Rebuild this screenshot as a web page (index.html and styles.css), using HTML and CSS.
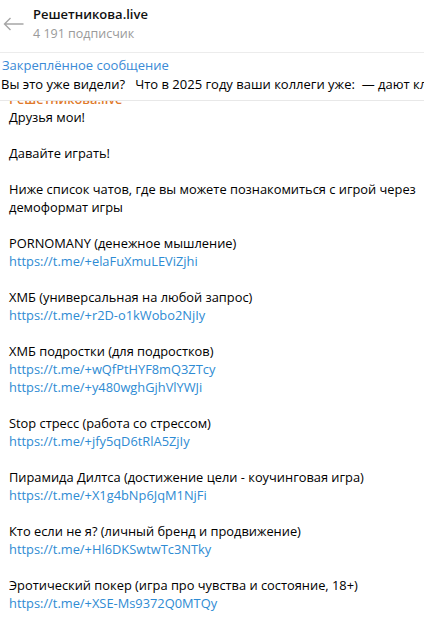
FILE: index.html
```html
<!DOCTYPE html>
<html lang="ru">
<head>
<meta charset="utf-8">
<link rel="stylesheet" href="styles.css">
</head>
<body>
<div class="app">
  <header class="top">
    <svg class="back" width="21" height="14" viewBox="0 0 21 14" aria-hidden="true">
      <path d="M20.5 7H1.5M7.5 1 1.5 7l6 6" fill="none" stroke="#a6a6a6" stroke-width="1.4"/>
    </svg>
    <div class="titles">
      <div class="name">Решетникова.live</div>
      <div class="subs">4 191 подписчик</div>
    </div>
  </header>
  <div class="pinned">
    <div class="pin-title">Закреплённое сообщение</div>
    <div class="pin-text">Вы это уже видели?&nbsp;&nbsp; Что в 2025 году ваши коллеги уже:&nbsp; — дают клиентам</div>
  </div>
  <main class="feed">
    <div class="msg">
      <div class="author">Решетникова.live</div>
      <div class="line">Друзья мои!</div>
      <div class="line gap"></div>
      <div class="line">Давайте играть!</div>
      <div class="line gap"></div>
      <div class="line">Ниже список чатов, где вы можете познакомиться с игрой через демоформат игры</div>
      <div class="line gap"></div>
      <div class="line">PORNOMANY (денежное мышление)</div>
      <a class="line link">https://t.me/+elaFuXmuLEViZjhi</a>
      <div class="line gap"></div>
      <div class="line">ХМБ (универсальная на любой запрос)</div>
      <a class="line link">https://t.me/+r2D-o1kWobo2NjIy</a>
      <div class="line gap"></div>
      <div class="line">ХМБ подростки (для подростков)</div>
      <a class="line link">https://t.me/+wQfPtHYF8mQ3ZTcy</a>
      <a class="line link">https://t.me/+y480wghGjhVlYWJi</a>
      <div class="line gap"></div>
      <div class="line">Stop стресс (работа со стрессом)</div>
      <a class="line link">https://t.me/+jfy5qD6tRlA5ZjIy</a>
      <div class="line gap"></div>
      <div class="line">Пирамида Дилтса (достижение цели - коучинговая игра)</div>
      <a class="line link">https://t.me/+X1g4bNp6JqM1NjFi</a>
      <div class="line gap"></div>
      <div class="line">Кто если не я? (личный бренд и продвижение)</div>
      <a class="line link">https://t.me/+Hl6DKSwtwTc3NTky</a>
      <div class="line gap"></div>
      <div class="line">Эротический покер (игра про чувства и состояние, 18+)</div>
      <a class="line link">https://t.me/+XSE-Ms9372Q0MTQy</a>
      <div class="line gap"></div>
      <div class="line">&nbsp;</div>
    </div>
  </main>
</div>
</body>
</html>
```
FILE: styles.css
```css
* { box-sizing: border-box; }
html, body { margin: 0; padding: 0; background: #fff; }
body {
  font-family: "Open Sans", "Noto Sans", sans-serif;
  font-size: 13px;
  color: #000;
  width: 424px;
  height: 624px;
  overflow: hidden;
}
.app { display: flex; flex-direction: column; height: 624px; }
.top {
  height: 53px;
  flex: none;
  display: flex;
  align-items: flex-start;
  border-bottom: 1px solid #ececec;
}
.back { margin: 17px 0 0 3px; flex: none; }
.titles { margin: 5px 0 0 9px; }
.name { font-weight: 600; font-size: 13px; line-height: 18px; color: #111; }
.subs { color: #9a9a9a; font-size: 12.5px; line-height: 18px; margin-top: 2px; }
.pinned {
  flex: none;
  height: 48px;
  padding: 3px 0 0 2px;
  border-bottom: 1px solid #e8e8e8;
  position: relative;
  z-index: 1;
  background: #fff;
  white-space: nowrap;
  overflow: hidden;
}
.pin-title { color: #3a8ad6; line-height: 19px; }
.pin-text { line-height: 19px; margin-left: -1px; }
.feed { flex: 1; overflow: hidden; }
.msg { padding: 0 0 0 9px; font-size: 12.85px; }
.author { color: #e07a2c; line-height: 18px; margin-top: -11px; font-weight: 600; }
.line { display: block; line-height: 18px; min-height: 18px; }
.link { color: #2e8bd3; text-decoration: none; }
```
